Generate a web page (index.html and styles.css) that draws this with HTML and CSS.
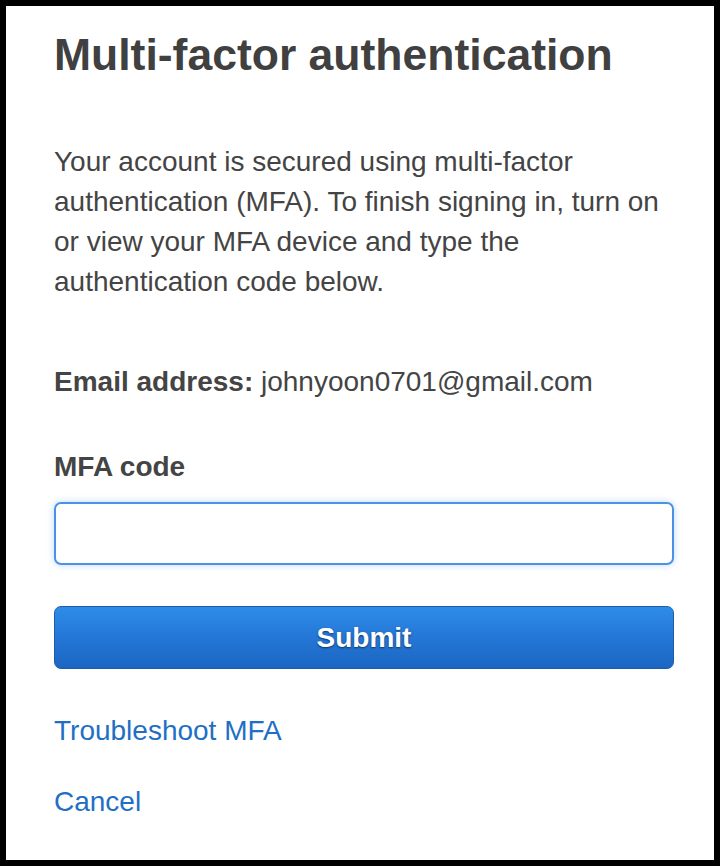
FILE: index.html
```html
<!DOCTYPE html>
<html lang="en">
<head>
<meta charset="utf-8">
<title>Multi-factor authentication</title>
<link rel="stylesheet" href="styles.css">
</head>
<body>
<div class="card">
  <h1 class="title">Multi-factor authentication</h1>
  <p class="intro">Your account is secured using multi-factor authentication (MFA). To finish signing in, turn on or view your MFA device and type the authentication code below.</p>
  <p class="email"><strong>Email address:</strong> johnyoon0701@gmail.com</p>
  <label class="label" for="mfa">MFA code</label>
  <input class="field" id="mfa" type="text">
  <button class="submit" type="button">Submit</button>
  <a class="link link-first" href="#">Troubleshoot MFA</a>
  <a class="link link-second" href="#">Cancel</a>
</div>
</body>
</html>
```

FILE: styles.css
```css
html, body {
  margin: 0;
  padding: 0;
  background: #000;
}
body {
  padding: 6px;
  font-family: "Liberation Sans", Arial, sans-serif;
}
.card {
  background: #fff;
  height: 854px;
  box-sizing: border-box;
  padding: 23px 40px 0 48px;
  display: flex;
  flex-direction: column;
  align-items: flex-start;
  color: #444;
}
.title {
  margin: 0;
  font-size: 44.5px;
  line-height: 52px;
  font-weight: bold;
  color: #404040;
}
.intro {
  margin: 61px 0 0;
  font-size: 28px;
  line-height: 40px;
  width: 620px;
}
.email {
  margin: 60px 0 0;
  font-size: 28px;
  line-height: 40px;
}
.email strong {
  font-weight: bold;
}
.label {
  margin-top: 45px;
  font-size: 28px;
  line-height: 40px;
  font-weight: bold;
}
.field {
  margin-top: 15px;
  width: 620px;
  height: 63px;
  box-sizing: border-box;
  border: 2px solid #4a92e4;
  border-radius: 7px;
  box-shadow: 0 0 7px rgba(74, 146, 228, 0.35);
  outline: none;
  background: #fff;
}
.submit {
  margin-top: 41px;
  width: 620px;
  height: 63px;
  box-sizing: border-box;
  border: 1px solid #1b5dab;
  border-radius: 7px;
  background: linear-gradient(to bottom, #2e8ce8 0%, #2477d6 50%, #1c66c2 100%);
  color: #fff;
  font-family: "Liberation Sans", Arial, sans-serif;
  font-size: 28px;
  font-weight: bold;
  text-shadow: 0 1px 2px rgba(0, 0, 0, 0.55);
  padding: 0;
}
.link {
  font-size: 28px;
  line-height: 40px;
  color: #1f6fc5;
  text-decoration: none;
}
.link-first {
  margin-top: 42px;
}
.link-second {
  margin-top: 31px;
}
```
